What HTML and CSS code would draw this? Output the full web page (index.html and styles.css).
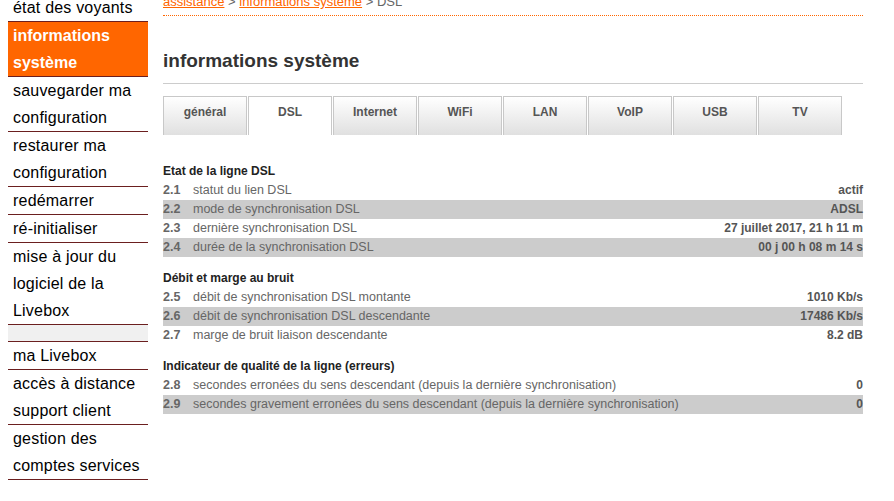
FILE: index.html
```html
<!DOCTYPE html>
<html lang="fr">
<head>
<meta charset="utf-8">
<title>informations système</title>
<link rel="stylesheet" href="styles.css">
</head>
<body>
<div class="page">
  <ul class="sidenav">
    <li class="nav-item">état des voyants</li>
    <li class="nav-item active">informations système</li>
    <li class="nav-item">sauvegarder ma configuration</li>
    <li class="nav-item">restaurer ma configuration</li>
    <li class="nav-item">redémarrer</li>
    <li class="nav-item">ré-initialiser</li>
    <li class="nav-item">mise à jour du logiciel de la Livebox</li>
    <li class="nav-spacer"></li>
    <li class="nav-item">ma Livebox</li>
    <li class="nav-item"><span class="nav-line">accès à distance</span><span class="nav-line">support client</span></li>
    <li class="nav-item">gestion des comptes services</li>
  </ul>
  <main class="content">
    <div class="breadcrumb"><a class="crumb-link">assistance</a> &gt; <a class="crumb-link">informations système</a> &gt; DSL</div>
    <h1 class="title">informations système</h1>
    <div class="tabs">
      <div class="tab">général</div>
      <div class="tab active">DSL</div>
      <div class="tab">Internet</div>
      <div class="tab">WiFi</div>
      <div class="tab">LAN</div>
      <div class="tab">VoIP</div>
      <div class="tab">USB</div>
      <div class="tab">TV</div>
    </div>

    <section class="section first">
      <h2 class="section-title">Etat de la ligne DSL</h2>
      <div class="rows">
        <div class="row"><span class="num">2.1</span><span class="label">statut du lien DSL</span><span class="value">actif</span></div>
        <div class="row"><span class="num">2.2</span><span class="label">mode de synchronisation DSL</span><span class="value">ADSL</span></div>
        <div class="row"><span class="num">2.3</span><span class="label">dernière synchronisation DSL</span><span class="value">27 juillet 2017, 21 h 11 m</span></div>
        <div class="row"><span class="num">2.4</span><span class="label">durée de la synchronisation DSL</span><span class="value">00 j 00 h 08 m 14 s</span></div>
      </div>
    </section>

    <section class="section">
      <h2 class="section-title">Débit et marge au bruit</h2>
      <div class="rows">
        <div class="row"><span class="num">2.5</span><span class="label">débit de synchronisation DSL montante</span><span class="value">1010 Kb/s</span></div>
        <div class="row"><span class="num">2.6</span><span class="label">débit de synchronisation DSL descendante</span><span class="value">17486 Kb/s</span></div>
        <div class="row"><span class="num">2.7</span><span class="label">marge de bruit liaison descendante</span><span class="value">8.2 dB</span></div>
      </div>
    </section>

    <section class="section">
      <h2 class="section-title">Indicateur de qualité de la ligne (erreurs)</h2>
      <div class="rows">
        <div class="row"><span class="num">2.8</span><span class="label">secondes erronées du sens descendant (depuis la dernière synchronisation)</span><span class="value">0</span></div>
        <div class="row"><span class="num">2.9</span><span class="label">secondes gravement erronées du sens descendant (depuis la dernière synchronisation)</span><span class="value">0</span></div>
      </div>
    </section>
  </main>
</div>
</body>
</html>
```
FILE: styles.css
```css
* { box-sizing: border-box; }

html, body {
  margin: 0;
  padding: 0;
  background: #fff;
  font-family: "Liberation Sans", Arial, sans-serif;
  overflow: hidden;
}

.page {
  display: flex;
  align-items: flex-start;
  gap: 15px;
  padding-left: 8px;
  margin-top: -6px;
}

/* sidebar */
.sidenav {
  list-style: none;
  margin: 0;
  padding: 0;
  width: 140px;
  flex: none;
}

.nav-item {
  padding: 0 5px;
  font-size: 16px;
  letter-spacing: 0.2px;
  line-height: 27px;
  color: #000;
  border-bottom: 1px solid #6b1f1f;
}

.nav-item.active {
  background: #ff6600;
  color: #fff;
  font-weight: bold;
  letter-spacing: 0;
}

.nav-line { display: block; }

.nav-spacer {
  height: 17px;
  background: #f0f0f0;
  border-bottom: 1px solid #6b1f1f;
}

/* main */
.content {
  width: 700px;
  flex: none;
}

.breadcrumb {
  font-size: 13px;
  line-height: 16px;
  color: #666;
  padding-bottom: 5px;
  border-bottom: 1px dotted #ff6600;
}

.crumb-link {
  color: #ff6600;
  text-decoration: underline;
}

.title {
  margin: 34px 0 0;
  font-size: 19px;
  line-height: 22px;
  font-weight: bold;
  color: #333;
  padding-bottom: 11px;
  border-bottom: 1px solid #cccccc;
}

.tabs {
  display: flex;
  gap: 1px;
  margin-top: 12px;
}

.tab {
  width: 84px;
  height: 39px;
  border: 1px solid #c8c8c8;
  border-bottom: none;
  background: linear-gradient(#ffffff, #e0e0e0);
  text-align: center;
  font-size: 12px;
  font-weight: bold;
  line-height: 16px;
  padding-top: 7px;
  color: #555;
}

.tab.active {
  background: #fff;
}

.section { margin-top: 12px; }
.section.first { margin-top: 27px; }

.section-title {
  margin: 0;
  font-size: 12px;
  line-height: 19px;
  font-weight: bold;
  color: #222;
}

.row {
  display: flex;
  height: 19px;
  line-height: 19px;
  font-size: 12px;
  color: #666;
}

.row:nth-child(even) { background: #cccccc; }

.num {
  width: 30px;
  flex: none;
  font-weight: bold;
  font-size: 12.5px;
  color: #666;
}

.label {
  flex: 1;
  font-size: 12.5px;
  white-space: nowrap;
}

.value {
  font-weight: bold;
  color: #555;
  text-align: right;
  white-space: nowrap;
}
```
